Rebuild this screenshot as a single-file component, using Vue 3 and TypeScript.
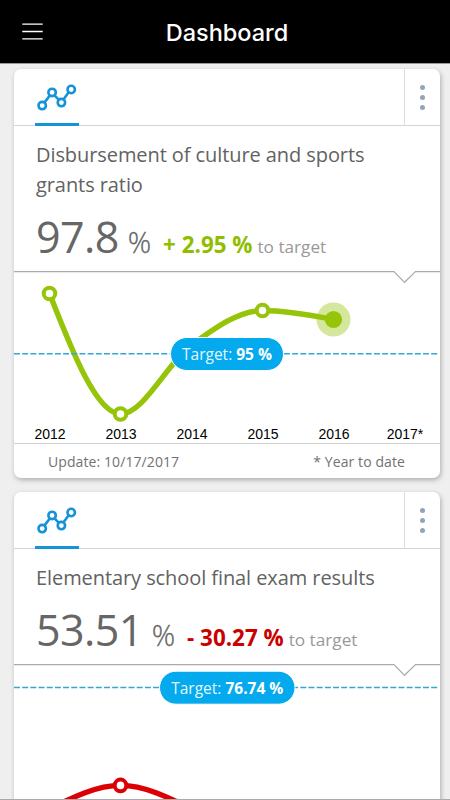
<script setup lang="ts">
interface Point { x: number; y: number; active?: boolean }
interface Metric {
  id: string
  title: string
  value: string
  delta: string
  tone: 'good' | 'bad'
  target: string
  targetY: number
  pillX: number
  pillWidth: number
  curve: string
  points: Point[]
  years: string[]
  updated?: string
}

const metrics: Metric[] = [
  {
    id: 'grants',
    title: 'Disbursement of culture and sports grants ratio',
    value: '97.8',
    delta: '+ 2.95 %',
    tone: 'good',
    target: '95 %',
    targetY: 82.8,
    pillX: 157,
    pillWidth: 112,
    curve: 'M35.5 22.5C59 82.7 83 143 106.5 143C130 143 154 91 177.5 74C201 57 225 39.5 248.5 39.5C272 39.5 296 44 319.5 48.5',
    points: [
      { x: 35.5, y: 22.5 },
      { x: 106.5, y: 143 },
      { x: 248.5, y: 39.5 },
      { x: 319.5, y: 48.5, active: true },
    ],
    years: ['2012', '2013', '2014', '2015', '2016', '2017*'],
    updated: '10/17/2017',
  },
  {
    id: 'exams',
    title: 'Elementary school final exam results',
    value: '53.51',
    delta: '- 30.27 %',
    tone: 'bad',
    target: '76.74 %',
    targetY: 23.5,
    pillX: 146,
    pillWidth: 134.5,
    curve: 'M35.5 145C59 133 83 121.4 106.5 121.4C130 121.4 154 133 177.5 145',
    points: [{ x: 106.5, y: 121.4 }],
    years: [],
  },
]
</script>

<template>
  <div class="screen">
    <header class="topbar">
      <button class="menu" aria-label="Menu">
        <svg width="21" height="17" viewBox="0 0 21 17"><path d="M0.3 1.1H20.7M0.3 8.5H20.7M0.3 15.9H20.7" stroke="#fff" stroke-width="1.3" /></svg>
      </button>
      <h1>Dashboard</h1>
    </header>
    <main class="list">
      <article v-for="m in metrics" :key="m.id" class="card" :class="m.tone">
        <div class="tabs">
          <div class="tab">
            <svg width="44" height="36" viewBox="0 0 44 36">
              <g fill="none" stroke="currentColor" stroke-width="2.6">
                <path d="M9.4 21.6L15 14.2M19.3 14.1L24.1 19.2M28.6 18.2L34.2 10.6" />
                <circle cx="7.2" cy="24.6" r="3.7" />
                <circle cx="17.1" cy="11.4" r="3.7" />
                <circle cx="26.4" cy="21.6" r="3.7" />
                <circle cx="36.2" cy="8.5" r="3.7" />
              </g>
            </svg>
          </div>
          <button class="more" aria-label="More"><i></i><i></i><i></i></button>
        </div>
        <section class="summary">
          <h2>{{ m.title }}</h2>
          <div class="figures">
            <span class="value">{{ m.value }}</span>
            <span class="unit">%</span>
            <span class="delta">{{ m.delta }}</span>
            <span class="note">to target</span>
          </div>
        </section>
        <svg class="chart" width="426" height="172" viewBox="0 0 426 172">
          <path class="edge" d="M0 0.6H380L390.5 11.3L401.5 0.6H426" />
          <path class="curve" :d="m.curve" />
          <line class="target" x1="0" x2="423.5" :y1="m.targetY" :y2="m.targetY" />
          <template v-for="p in m.points" :key="p.x">
            <template v-if="p.active">
              <circle class="halo" :cx="p.x" :cy="p.y" r="17" />
              <circle class="dot" :cx="p.x" :cy="p.y" r="8.6" />
            </template>
            <circle v-else class="ring" :cx="p.x" :cy="p.y" r="5.8" />
          </template>
          <rect class="pill" :x="m.pillX - 0.5" :y="m.targetY - 16.3" :width="m.pillWidth + 1" height="33" rx="16.5" />
          <text class="pill-text" :x="m.pillX + m.pillWidth / 2" :y="m.targetY + 6.4" text-anchor="middle">Target: <tspan>{{ m.target }}</tspan></text>
          <text v-for="(year, i) in m.years" :key="year" class="year" :x="36 + i * 71" y="168" text-anchor="middle">{{ year }}</text>
        </svg>
        <footer v-if="m.updated">
          <span>Update: {{ m.updated }}</span>
          <span>* Year to date</span>
        </footer>
      </article>
    </main>
  </div>
</template>

<style>
body {
  margin: 0;
  overflow: hidden;
}
</style>

<style scoped>
.screen {
  box-sizing: border-box;
  width: 450px;
  height: 800px;
  overflow: hidden;
  background: #efefef;
  border-bottom: 1px solid #aaa;
  font-family: "Open Sans", sans-serif;
}
button {
  padding: 0;
  border: 0;
  background: none;
}
.topbar {
  display: grid;
  grid-template-columns: 64px 1fr 64px;
  align-items: center;
  height: 63px;
  background: #000;
  border-bottom: 1px solid #999;
}
.menu {
  width: 21px;
  margin-left: 22px;
}
.menu svg { display: block; }
h1 {
  margin: 2px 0 0 4px;
  color: #fff;
  font: 500 23.5px/28px Inter, sans-serif;
  text-align: center;
}
.list {
  display: flex;
  flex-direction: column;
  gap: 14px;
  padding: 5px 10px 0 14px;
}
.card {
  background: #fff;
  border-radius: 7px;
  box-shadow: 1px 2px 5px rgba(0, 0, 0, 0.28);
}
.good { --tone: #95c408; --delta: #8fbe00; }
.bad { --tone: #dc0005; --delta: #cb0000; }
.tabs {
  display: flex;
  justify-content: space-between;
  box-sizing: border-box;
  height: 57px;
  border-bottom: 1px solid #d4d4d4;
}
.tab {
  box-sizing: border-box;
  width: 44px;
  height: 57px;
  margin-left: 21.4px;
  padding-top: 12px;
  color: #1593d8;
  border-bottom: 3px solid #1593d8;
}
.tab svg { display: block; }
.more {
  box-sizing: border-box;
  display: flex;
  flex-direction: column;
  align-items: center;
  justify-content: center;
  gap: 4.4px;
  width: 36px;
  padding-top: 1px;
  border-left: 1.5px solid #dedede;
}
.more i {
  width: 5.6px;
  height: 5.6px;
  border-radius: 50%;
  background: #94a4b8;
}
.summary {
  padding: 14px 22px 0;
}
h2 {
  margin: 0;
  color: #626262;
  font-size: 20px;
  font-weight: 400;
  line-height: 30px;
  letter-spacing: -0.08px;
}
.figures {
  display: flex;
  align-items: baseline;
  height: 71px;
  line-height: 74px;
  white-space: nowrap;
}
.value {
  color: #666;
  font-size: 43px;
  letter-spacing: -0.6px;
}
.unit {
  margin-left: 9px;
  color: #666;
  font-size: 29px;
  font-weight: 300;
  -webkit-text-stroke: 0.3px #666;
}
.delta {
  margin-left: 12px;
  color: var(--delta);
  font-size: 22.4px;
  font-weight: 700;
}
.note {
  margin-left: 5px;
  color: #999;
  font-size: 17.2px;
}
.chart {
  display: block;
}
.edge {
  fill: none;
  stroke: #aaa;
  stroke-width: 1.2;
}
.curve {
  fill: none;
  stroke: var(--tone);
  stroke-width: 5.4;
}
.target {
  stroke: #35a6d3;
  stroke-width: 1.6;
  stroke-dasharray: 6 2.18;
}
.ring {
  fill: #fff;
  stroke: var(--tone);
  stroke-width: 4;
}
.dot { fill: var(--tone); }
.halo {
  fill: var(--tone);
  opacity: 0.4;
}
.pill {
  fill: #04a9ee;
  stroke: #fff;
  stroke-width: 1;
}
.pill-text {
  fill: #e2f8ff;
  font-size: 15.5px;
}
.pill-text tspan {
  fill: #fff;
  font-weight: 700;
}
.year {
  fill: #000;
  font: 14px "Liberation Sans", sans-serif;
}
footer {
  box-sizing: border-box;
  display: flex;
  justify-content: space-between;
  height: 35px;
  padding: 0 35px 0 34px;
  border-top: 1px solid #d0d0d0;
  color: #727272;
  font-size: 14px;
  line-height: 36px;
  letter-spacing: 0.09px;
}
</style>
